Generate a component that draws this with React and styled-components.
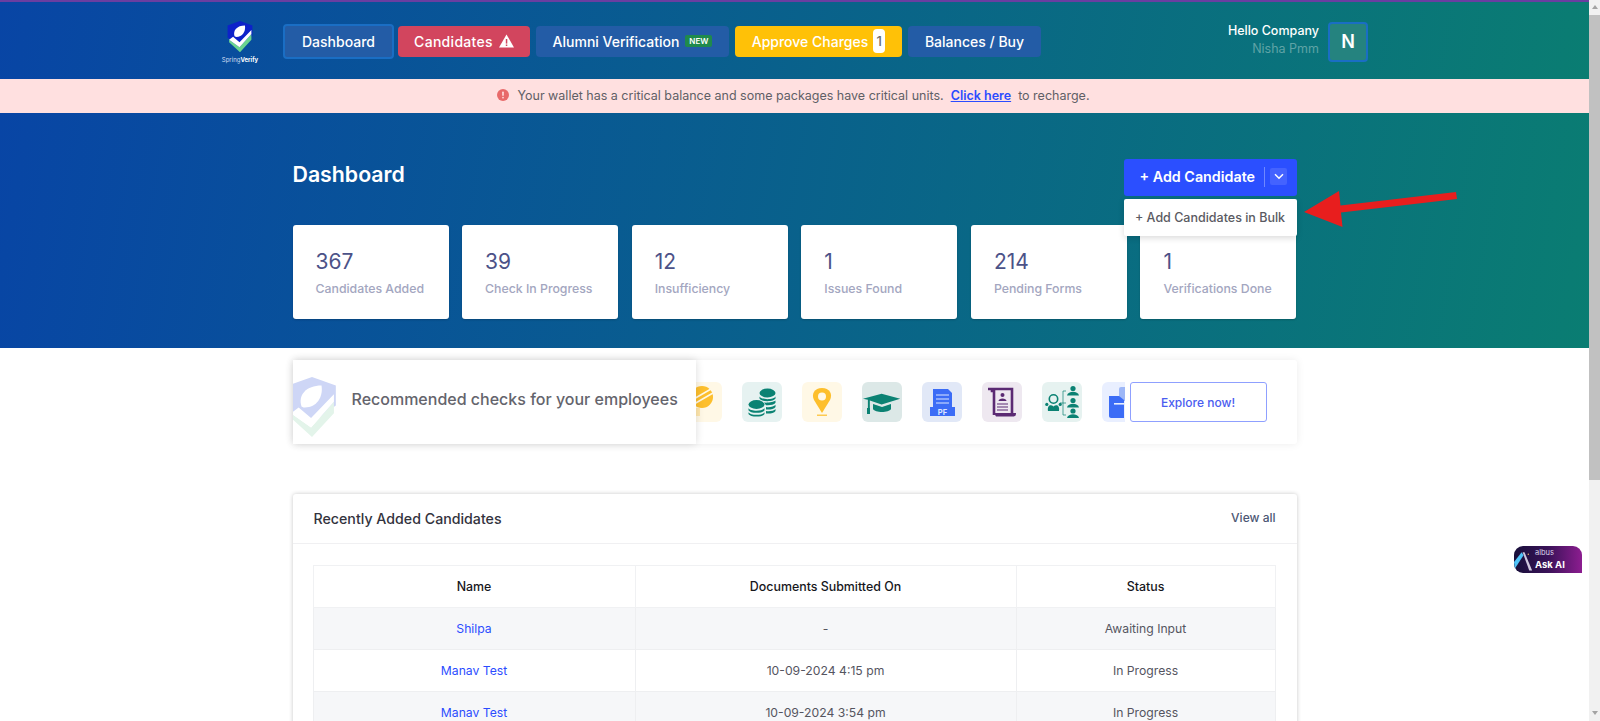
import React from "react";
import styled, { createGlobalStyle } from "styled-components";

const GlobalStyle = createGlobalStyle`
  html, body {
    margin: 0;
    padding: 0;
    height: 100%;
    overflow: hidden;
    background: #fff;
    font-family: Inter, "Noto Sans", "Liberation Sans", sans-serif;
  }
  * { box-sizing: border-box; }
`;

const stats = [
  { value: "367", label: "Candidates Added" },
  { value: "39", label: "Check In Progress" },
  { value: "12", label: "Insufficiency" },
  { value: "1", label: "Issues Found" },
  { value: "214", label: "Pending Forms" },
  { value: "1", label: "Verifications Done" },
];

const rows = [
  { name: "Shilpa", date: "-", status: "Awaiting Input" },
  { name: "Manav Test", date: "10-09-2024 4:15 pm", status: "In Progress" },
  { name: "Manav Test", date: "10-09-2024 3:54 pm", status: "In Progress" },
];

const ShieldLogo = ({ shield, leaf, check, size = 26 }) => (
  <svg width={size} height={size * 1.22} viewBox="0 0 26 32">
    <path d="M13 0 L25.5 4.5 V15 L13 24 L0.5 17 V4.5 Z" fill={shield} />
    <path d="M7.5 15.5 C5.5 9.5 10 4.5 18 4.5 C19 11 15 16.5 8.5 16 Z" fill={leaf} />
    <path d="M2 19 L12.5 26.5 L24.5 13 V19 L13 31.5 L2 21.5 Z" fill={check} />
    <path d="M2 19 L6 16 L12.5 21.5 L24.5 9 V13 L12.5 26.5 Z" fill={leaf} />
  </svg>
);

const WarnIcon = () => (
  <svg width="15" height="14" viewBox="0 0 15 14">
    <path d="M7.5 0.5 L15 13.5 H0 Z" fill="#fff" />
    <rect x="6.8" y="5" width="1.5" height="4.6" fill="#d2455e" />
    <rect x="6.8" y="10.5" width="1.5" height="1.5" fill="#d2455e" />
  </svg>
);

const AlertIcon = () => (
  <svg width="12" height="12" viewBox="0 0 12 12">
    <circle cx="6" cy="6" r="6" fill="#e86a6a" />
    <rect x="5.2" y="2.6" width="1.6" height="4.2" rx="0.6" fill="#ffe0e0" />
    <rect x="5.2" y="7.8" width="1.6" height="1.6" rx="0.6" fill="#ffe0e0" />
  </svg>
);

const CoinIcon = () => (
  <svg width="40" height="40" viewBox="0 0 40 40">
    <circle cx="20" cy="15" r="11" fill="#fdbf2d" />
    <path d="M10 18 L29 7 M12 22 L31 11" stroke="#fff8e6" strokeWidth="1.6" />
    <rect x="13" y="26" width="5" height="8" fill="#ffe7ad" />
  </svg>
);

const CoinsIcon = () => (
  <svg width="40" height="40" viewBox="0 0 40 40" fill="#0b8273">
    <ellipse cx="25.5" cy="11" rx="8" ry="4.4" />
    <path d="M17.5 14.5 C19 18 32 18 33.5 14.5 V16.6 C32 20 19 20 17.5 16.6 Z" />
    <path d="M22 20.6 C26 21 32 20 33.5 18.6 V20.8 C32 23 27 23.6 24 23.2 Z" />
    <path d="M24 25 C27 25.6 32 25 33.5 22.8 V25 C32 27.2 27 28 24 27.4 Z" />
    <path d="M24 29 C27 29.6 32 29 33.5 27 V29 C32 31.4 27 32 24 31.4 Z" />
    <ellipse cx="14.5" cy="22.5" rx="8" ry="4.4" />
    <path d="M6.5 26 C8 29.6 21 29.6 22.5 26 V28.2 C21 31.6 8 31.6 6.5 28.2 Z" />
    <path d="M6.5 30.2 C8 33.6 21 33.6 22.5 30.2 V32 C21 35.4 8 35.4 6.5 32 Z" />
  </svg>
);

const PinIcon = () => (
  <svg width="40" height="40" viewBox="0 0 40 40">
    <path d="M20 6 C12.5 6 9 12 12 18 L20 31 L28 18 C31 12 27.5 6 20 6 Z" fill="#fdbf2d" />
    <circle cx="20" cy="14.5" r="4" fill="#fff8e6" />
    <rect x="15" y="32.6" width="10" height="1.2" fill="#fdbf2d" />
  </svg>
);

const CapIcon = () => (
  <svg width="40" height="40" viewBox="0 0 40 40" fill="#0b8273">
    <path d="M20 12 L39 17 L20 23 L8 19 V28 H6 V18.2 L1 17 Z" transform="translate(0 0) scale(0.98)" />
    <path d="M11 22 L20 25 L29 22 V27 C27 31 13 31 11 27 Z" />
    <rect x="5" y="26" width="3" height="6" />
  </svg>
);

const PfIcon = () => (
  <svg width="40" height="40" viewBox="0 0 40 40">
    <path d="M11 7 H26 L30 11 V25 H11 Z" fill="#3b6cf6" />
    <path d="M14 13 H27 M14 17 H27 M14 21 H27" stroke="#dbe6ff" strokeWidth="1" />
    <rect x="8" y="25" width="25" height="9" fill="#3b6cf6" />
    <text x="20.5" y="32.5" textAnchor="middle" fontSize="7.5" fontWeight="700" fill="#dbe6ff" fontFamily="Inter, sans-serif">PF</text>
  </svg>
);

const ScrollIcon = () => (
  <svg width="40" height="40" viewBox="0 0 40 40">
    <path d="M6 7 H30 V31 M10 7 V9 H12 M12 7 V33" fill="none" stroke="#5b2a73" strokeWidth="2.6" />
    <path d="M12 31 H34 C34 34 33 34.4 31 34.4 H14 Z" fill="#5b2a73" />
    <circle cx="20.5" cy="13" r="2" fill="#5b2a73" />
    <path d="M16.5 19 C16.5 15.6 24.5 15.6 24.5 19 Z" fill="#5b2a73" />
    <path d="M15 22 H26 M15 25 H26 M15 28 H26" stroke="#5b2a73" strokeWidth="1" />
  </svg>
);

const OrgIcon = () => (
  <svg width="40" height="40" viewBox="0 0 40 40" fill="#0b8273">
    <circle cx="11.5" cy="17" r="4.2" fill="none" stroke="#0b8273" strokeWidth="1.6" />
    <path d="M6 29 C5 23 9 22 11.5 24.5 C14 22 18 23 17 29 Z" />
    <circle cx="4.8" cy="22.4" r="1.6" />
    <circle cx="18.2" cy="22.4" r="1.6" />
    <path d="M18 21 H21 M21 9 V33 M21 9 H24 M21 21 H24 M21 33 H24" fill="none" stroke="#0b8273" strokeWidth="0.7" />
    <circle cx="31" cy="6.5" r="2.6" />
    <path d="M25 13.6 C26 8.6 36 8.6 37 13.6 Z" />
    <circle cx="31" cy="18.5" r="2.6" />
    <path d="M25 25.6 C26 20.6 36 20.6 37 25.6 Z" />
    <circle cx="31" cy="29" r="2.6" />
    <path d="M25 36 C26 31 36 31 37 36 Z" />
  </svg>
);

const FileIcon = () => (
  <svg width="40" height="40" viewBox="0 0 40 40">
    <rect x="17" y="5" width="14" height="14" rx="2" fill="#9db7f7" />
    <path d="M7 14 H17 L22 18 V36 H9 C8 36 7 35 7 34 Z" fill="#3b6cf6" />
    <rect x="12" y="21" width="12" height="1.6" fill="#e8efff" />
  </svg>
);

const tiles = [
  { bg: "#fff8e6", icon: <CoinIcon /> },
  { bg: "#e6f2f1", icon: <CoinsIcon /> },
  { bg: "#fff8e6", icon: <PinIcon /> },
  { bg: "#dce8e7", icon: <CapIcon /> },
  { bg: "#e1e8f7", icon: <PfIcon /> },
  { bg: "#eee8f0", icon: <ScrollIcon /> },
  { bg: "#e6f2f0", icon: <OrgIcon /> },
  { bg: "#e9efff", icon: <FileIcon /> },
];

const App = () => {
  return (
    <Shell>
      <GlobalStyle />
      <Page>
        <TopStrip />
        <Header>
          <Logo>
            <ShieldLogo shield="#0d22c9" leaf="#fff" check="#69d48f" />
            <LogoText>
              Spring<b>Verify</b>
            </LogoText>
          </Logo>
          <Nav>
            <NavButton $active $w="111px">Dashboard</NavButton>
            <NavButton $bg="#d2455e" $w="132px">
              <NavText $track="0.3px">Candidates</NavText> <WarnIcon />
            </NavButton>
            <NavButton $w="193px">
              Alumni Verification <NewTag>NEW</NewTag>
            </NavButton>
            <NavButton $bg="#ffc107" $w="167px">
              Approve Charges <CountTag>1</CountTag>
            </NavButton>
            <NavButton $w="133px">Balances / Buy</NavButton>
          </Nav>
          <UserBlock>
            <UserText>
              <UserHello>Hello Company</UserHello>
              <UserName>Nisha Pmm</UserName>
            </UserText>
            <Avatar>N</Avatar>
          </UserBlock>
        </Header>
        <Banner>
          <AlertIcon />
          <span>
            Your wallet has a critical balance and some packages have critical units.&nbsp;&nbsp;
            <BannerLink>Click here</BannerLink>&nbsp; to recharge.
          </span>
        </Banner>
        <Hero>
          <Container>
            <TitleRow>
              <Title>Dashboard</Title>
              <AddWrap>
                <AddButton>
                  + Add Candidate
                  <AddDivider />
                  <AddCaret>
                    <svg width="10" height="7" viewBox="0 0 10 7">
                      <path d="M1 1.2 L5 5.2 L9 1.2" fill="none" stroke="#fff" strokeWidth="1.5" />
                    </svg>
                  </AddCaret>
                </AddButton>
                <AddMenu>+ Add Candidates in Bulk</AddMenu>
              </AddWrap>
            </TitleRow>
            <StatGrid>
              {stats.map((s) => (
                <StatCard key={s.label}>
                  <StatValue>{s.value}</StatValue>
                  <StatLabel>{s.label}</StatLabel>
                </StatCard>
              ))}
            </StatGrid>
          </Container>
        </Hero>
        <Container>
          <Strip>
            <StripLead>
              <LeadLogo>
                <ShieldLogo shield="#ced6f6" leaf="#fff" check="#e3f4ea" size={50} />
              </LeadLogo>
              <LeadText>Recommended checks for your employees</LeadText>
            </StripLead>
            <TileTrack>
              {tiles.map((t, i) => (
                <Tile key={i} $bg={t.bg}>
                  {t.icon}
                </Tile>
              ))}
            </TileTrack>
            <ExploreButton>Explore now!</ExploreButton>
          </Strip>
          <TableCard>
            <TableHead>
              <TableTitle>Recently Added Candidates</TableTitle>
              <ViewAll>View all</ViewAll>
            </TableHead>
            <TableBody>
              <Table>
                <colgroup>
                  <col width="322" />
                  <col width="381" />
                  <col width="259" />
                </colgroup>
                <thead>
                  <tr>
                    <Th>Name</Th>
                    <Th>Documents Submitted On</Th>
                    <Th>Status</Th>
                  </tr>
                </thead>
                <tbody>
                  {rows.map((r, i) => (
                    <Row key={i} $alt={i % 2 === 0}>
                      <Td $link>{r.name}</Td>
                      <Td>{r.date}</Td>
                      <Td>{r.status}</Td>
                    </Row>
                  ))}
                </tbody>
              </Table>
            </TableBody>
          </TableCard>
        </Container>
        <AskAi>
          <svg width="21" height="22" viewBox="0 0 22 22">
            <path d="M0 13 L8 3 L10 6 L1 20 Z" fill="#4fc3f7" />
            <path d="M9 3 L11 3 L19 22 L16 22 Z" fill="#cfc7de" />
            <circle cx="15" cy="5" r="0.8" fill="#e0b06a" />
          </svg>
          <AskText>
            <AskBrand>albus</AskBrand>
            <AskLabel>Ask AI</AskLabel>
          </AskText>
        </AskAi>
        <Arrow width="160" height="40" viewBox="0 0 160 40">
          <path d="M1 22 L36 1 L37.5 15.5 L153 2 L154 9 L38 22.5 L39.5 37 Z" fill="#e81e1e" />
        </Arrow>
      </Page>
      <Scrollbar>
        <ScrollArrow $up />
        <ScrollThumb />
        <ScrollArrow />
      </Scrollbar>
    </Shell>
  );
};

const brandGradient = "linear-gradient(100deg, #0845a5 0%, #0a7d72 100%)";

const Shell = styled.div`
  display: flex;
  width: 100%;
  height: 100vh;
  overflow: hidden;
`;
const Page = styled.div`
  position: relative;
  flex: 1;
  min-width: 0;
  overflow: hidden;
`;
const TopStrip = styled.div`
  height: 2px;
  background: #6a3ea1;
`;
const Header = styled.div`
  display: flex;
  align-items: center;
  height: 77px;
  padding: 0 221px;
  background: ${brandGradient};
`;
const Logo = styled.div`
  display: flex;
  flex-direction: column;
  align-items: center;
  width: 38px;
  margin-top: 3px;
`;
const LogoText = styled.div`
  margin-top: 4px;
  font-size: 6px;
  color: #d5dff2;
  white-space: nowrap;
  b {
    color: #fff;
  }
`;
const Nav = styled.div`
  display: flex;
  align-items: center;
  gap: 6px;
  margin-left: 24px;
  margin-top: 1px;
`;
const NavButton = styled.div`
  display: flex;
  align-items: center;
  justify-content: center;
  gap: 6px;
  width: ${(p) => p.$w};
  height: ${(p) => (p.$active ? "35px" : "31px")};
  margin-right: ${(p) => (p.$active ? "-2px" : "0")};
  border-radius: 4px;
  border: ${(p) => (p.$active ? "2px solid #1a6ec4" : "none")};
  background: ${(p) => p.$bg || "#235ca6"};
  color: #fff;
  font-size: 14px;
  font-weight: 500;
  white-space: nowrap;
`;
const NavText = styled.span`
  letter-spacing: ${(p) => p.$track};
`;
const NewTag = styled.span`
  padding: 1px 4px;
  border-radius: 2px;
  background: #1f8a4c;
  color: #fff;
  font-size: 8px;
  font-weight: 600;
`;
const CountTag = styled.span`
  display: flex;
  align-items: center;
  justify-content: center;
  width: 12px;
  height: 24px;
  margin-left: -1px;
  border-radius: 4px;
  background: #fff;
  color: #6b6b6b;
  font-size: 13px;
`;
const UserBlock = styled.div`
  display: flex;
  align-items: center;
  gap: 9px;
  margin-left: auto;
  margin-top: 2px;
`;
const UserText = styled.div`
  display: flex;
  flex-direction: column;
  align-items: flex-end;
  gap: 3px;
  margin-bottom: 5px;
`;
const UserHello = styled.div`
  color: #fff;
  font-size: 12.5px;
  font-weight: 500;
`;
const UserName = styled.div`
  color: #5fa3a6;
  font-size: 12.5px;
`;
const Avatar = styled.div`
  display: flex;
  align-items: center;
  justify-content: center;
  width: 40px;
  height: 40px;
  border: 2px solid #1a6ec4;
  border-radius: 4px;
  background: #25837f;
  color: #fff;
  font-size: 18px;
  font-weight: 600;
`;
const Banner = styled.div`
  display: flex;
  align-items: center;
  justify-content: center;
  gap: 8px;
  height: 34px;
  padding: 0 2px 2px 0;
  background: #ffe0e0;
  color: #5f5f66;
  font-size: 12.5px;
`;
const BannerLink = styled.span`
  color: #2b4cff;
  font-weight: 600;
  text-decoration: underline;
`;
const Hero = styled.div`
  height: 235px;
  padding-top: 46px;
  background: ${brandGradient};
`;
const Container = styled.div`
  width: 1004px;
  margin: 0 auto;
`;
const TitleRow = styled.div`
  display: flex;
  align-items: flex-start;
  justify-content: space-between;
  height: 37px;
`;
const Title = styled.h1`
  margin: 0;
  color: #fff;
  font-size: 21.3px;
  font-weight: 600;
  line-height: 30px;
`;
const AddWrap = styled.div`
  position: relative;
  width: 173px;
`;
const AddButton = styled.div`
  display: flex;
  align-items: center;
  height: 37px;
  padding: 0 0 2px 16px;
  border-radius: 3px;
  background: #2b4fff;
  color: #fff;
  font-size: 14.3px;
  font-weight: 600;
  white-space: nowrap;
`;
const AddDivider = styled.span`
  width: 1px;
  height: 20px;
  margin-left: 9px;
  background: #6f88ff;
`;
const AddCaret = styled.span`
  display: flex;
  align-items: center;
  justify-content: center;
  width: 17px;
  height: 17px;
  margin-left: 5px;
  border-radius: 2px;
  background: #4463ff;
`;
const AddMenu = styled.div`
  position: absolute;
  top: 40px;
  left: 0;
  z-index: 2;
  display: flex;
  align-items: center;
  justify-content: center;
  width: 173px;
  height: 37px;
  border-radius: 2px;
  background: #fff;
  box-shadow: 0 2px 6px rgba(0, 0, 0, 0.15);
  color: #5a5a62;
  font-size: 12.5px;
  font-weight: 500;
  white-space: nowrap;
`;
const StatGrid = styled.div`
  display: grid;
  grid-template-columns: repeat(6, 156px);
  justify-content: space-between;
  margin-top: 29px;
`;
const StatCard = styled.div`
  height: 94px;
  padding: 25px 20px 0 23px;
  border-radius: 3px;
  background: #fff;
  box-shadow: 0 1px 2px rgba(0, 0, 0, 0.2);
`;
const StatValue = styled.div`
  color: #4c5288;
  font-size: 21px;
  line-height: 24px;
`;
const StatLabel = styled.div`
  margin-top: 7px;
  color: #a3a6c0;
  font-size: 12.3px;
  font-weight: 500;
  line-height: 16px;
  white-space: nowrap;
`;
const Strip = styled.div`
  display: flex;
  align-items: center;
  height: 84px;
  margin-top: 12px;
  padding-right: 30px;
  border-radius: 3px;
  background: #fff;
  box-shadow: 0 0 8px rgba(0, 0, 0, 0.08);
`;
const StripLead = styled.div`
  position: relative;
  z-index: 1;
  display: flex;
  align-items: center;
  flex: 0 0 403px;
  height: 84px;
  background: #fff;
  box-shadow: 0 0 8px rgba(0, 0, 0, 0.14);
`;
const LeadLogo = styled.div`
  flex: 0 0 44px;
  height: 61px;
  overflow: hidden;
  margin-top: 10px;
  svg {
    display: block;
    margin-left: -6px;
  }
`;
const LeadText = styled.div`
  margin-left: 15px;
  margin-bottom: 6px;
  color: #64646c;
  font-size: 16px;
  font-weight: 500;
  white-space: nowrap;
`;
const TileTrack = styled.div`
  display: flex;
  gap: 20px;
  flex: 0 0 443px;
  margin-left: -14px;
  overflow: hidden;
`;
const Tile = styled.div`
  display: flex;
  flex: 0 0 40px;
  height: 40px;
  border-radius: 6px;
  background: ${(p) => p.$bg};
`;
const ExploreButton = styled.div`
  display: flex;
  align-items: center;
  justify-content: center;
  flex: 0 0 137px;
  height: 40px;
  margin-left: 5px;
  border: 1px solid #8fa0ff;
  border-radius: 3px;
  color: #4a5cf0;
  font-size: 12px;
  font-weight: 500;
`;
const TableCard = styled.div`
  margin-top: 50px;
  border-radius: 3px;
  background: #fff;
  box-shadow: 0 0 4px rgba(0, 0, 0, 0.22);
`;
const TableHead = styled.div`
  display: flex;
  align-items: center;
  justify-content: space-between;
  height: 50px;
  padding: 0 21px 0 21px;
  border-bottom: 1px solid #f0f0f2;
`;
const TableTitle = styled.div`
  color: #33333d;
  font-size: 14.2px;
  font-weight: 500;
`;
const ViewAll = styled.div`
  margin-bottom: 2px;
  color: #4c5674;
  font-size: 12px;
  font-weight: 500;
`;
const TableBody = styled.div`
  padding: 21px 22px 20px 20px;
`;
const Table = styled.table`
  width: 962px;
  border-collapse: collapse;
  table-layout: fixed;
  font-size: 12.2px;
`;
const Th = styled.th`
  height: 42px;
  padding: 0;
  border: 1px solid #f0f1f3;
  color: #17171c;
  font-size: 12.4px;
  font-weight: 500;
`;
const Row = styled.tr`
  background: ${(p) => (p.$alt ? "#f6f7f9" : "#fff")};
`;
const Td = styled.td`
  height: 42px;
  padding: 0;
  border: 1px solid #eeeff1;
  text-align: center;
  color: ${(p) => (p.$link ? "#2b4cff" : "#55555f")};
`;
const AskAi = styled.div`
  position: absolute;
  top: 546px;
  right: 7px;
  display: flex;
  align-items: center;
  gap: 0;
  width: 68px;
  height: 27px;
  border-radius: 9px 9px 0 9px;
  background: linear-gradient(90deg, #170f3a 0%, #3a1258 50%, #8c1d90 100%);
`;
const AskText = styled.div`
  display: flex;
  flex-direction: column;
  color: #fff;
`;
const AskBrand = styled.div`
  color: #d9d3e8;
  font-size: 7.5px;
  line-height: 10px;
`;
const AskLabel = styled.div`
  font-size: 9.5px;
  font-weight: 700;
  line-height: 13px;
`;
const Arrow = styled.svg`
  position: absolute;
  top: 190px;
  left: 1303px;
  z-index: 3;
`;
const Scrollbar = styled.div`
  display: flex;
  flex-direction: column;
  flex: 0 0 11px;
  background: #f1f1f1;
`;
const ScrollArrow = styled.div`
  height: 15px;
  margin-top: ${(p) => (p.$up ? "0" : "auto")};
  &::after {
    content: "";
    display: block;
    width: 0;
    margin: 5px auto 0;
    border-left: 3px solid transparent;
    border-right: 3px solid transparent;
    border-${(p) => (p.$up ? "bottom" : "top")}: 4px solid #a3a3a3;
  }
`;
const ScrollThumb = styled.div`
  height: 465px;
  background: #c1c1c1;
`;

export default App;
